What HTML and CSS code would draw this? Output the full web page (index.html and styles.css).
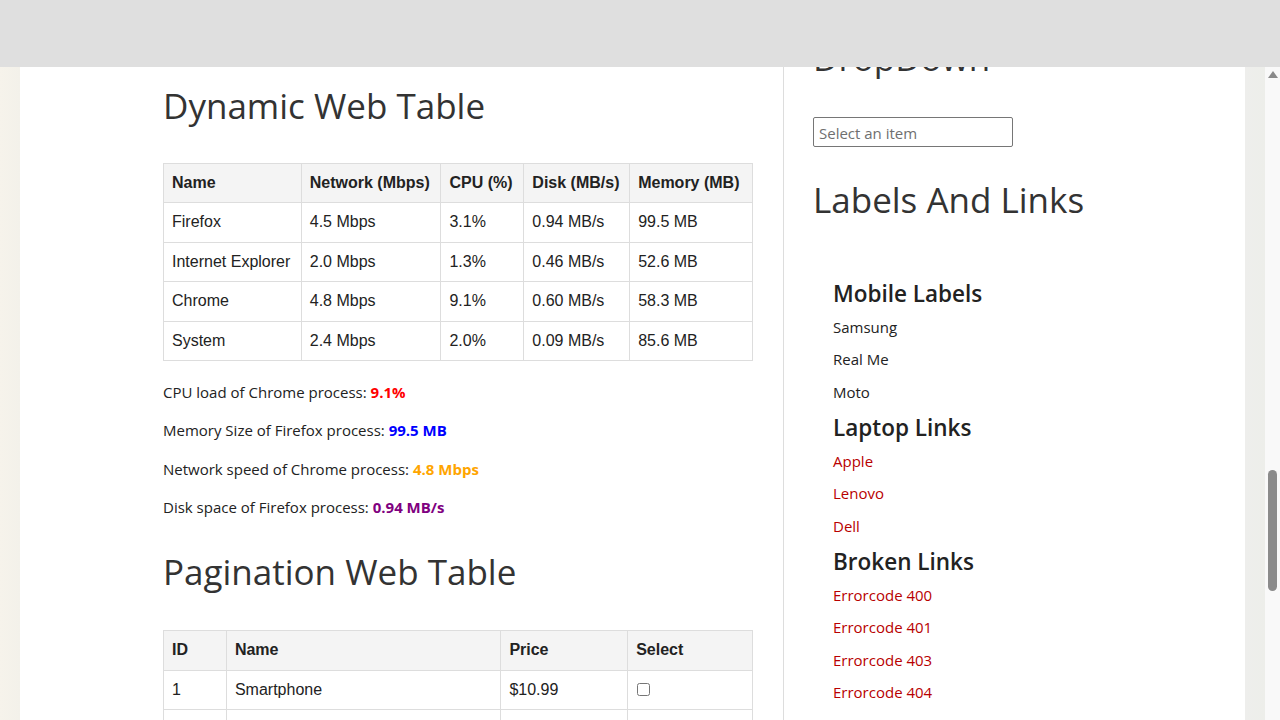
FILE: index.html
```html
<!DOCTYPE html>
<html lang="en">
<head>
<meta charset="utf-8">
<title>Web Tables</title>
<link rel="stylesheet" href="styles.css">
</head>
<body>
<div class="topbar"></div>
<div class="scrollbar">
  <div class="scroll-arrow"></div>
  <div class="scroll-thumb"></div>
</div>
<div class="page">
  <main class="main">
    <h2 class="title">Dynamic Web Table</h2>
    <table class="grid dyn">
      <thead>
        <tr><th class="c1">Name</th><th class="c2">Network (Mbps)</th><th class="c3">CPU (%)</th><th class="c4">Disk (MB/s)</th><th class="c5">Memory (MB)</th></tr>
      </thead>
      <tbody>
        <tr><td>Firefox</td><td>4.5 Mbps</td><td>3.1%</td><td>0.94 MB/s</td><td>99.5 MB</td></tr>
        <tr><td>Internet Explorer</td><td>2.0 Mbps</td><td>1.3%</td><td>0.46 MB/s</td><td>52.6 MB</td></tr>
        <tr><td>Chrome</td><td>4.8 Mbps</td><td>9.1%</td><td>0.60 MB/s</td><td>58.3 MB</td></tr>
        <tr><td>System</td><td>2.4 Mbps</td><td>2.0%</td><td>0.09 MB/s</td><td>85.6 MB</td></tr>
      </tbody>
    </table>
    <div class="facts">
      <p>CPU load of Chrome process: <strong class="red">9.1%</strong></p>
      <p>Memory Size of Firefox process: <strong class="blue">99.5 MB</strong></p>
      <p>Network speed of Chrome process: <strong class="orange">4.8 Mbps</strong></p>
      <p>Disk space of Firefox process: <strong class="purple">0.94 MB/s</strong></p>
    </div>
    <h2 class="title second">Pagination Web Table</h2>
    <table class="grid pag">
      <thead>
        <tr><th class="p1">ID</th><th class="p2">Name</th><th class="p3">Price</th><th class="p4">Select</th></tr>
      </thead>
      <tbody>
        <tr><td>1</td><td>Smartphone</td><td>$10.99</td><td><input type="checkbox"></td></tr>
        <tr><td>2</td><td>Laptop</td><td>$19.99</td><td><input type="checkbox"></td></tr>
      </tbody>
    </table>
  </main>
  <aside class="side">
    <h2 class="title">DropDown</h2>
    <input class="combo" type="text" placeholder="Select an item">
    <h2 class="title labels-title">Labels And Links</h2>
    <div class="widget">
      <h3 class="wtitle">Mobile Labels</h3>
      <ul class="items">
        <li>Samsung</li>
        <li>Real Me</li>
        <li>Moto</li>
      </ul>
      <h3 class="wtitle">Laptop Links</h3>
      <ul class="items links">
        <li><a href="#">Apple</a></li>
        <li><a href="#">Lenovo</a></li>
        <li><a href="#">Dell</a></li>
      </ul>
      <h3 class="wtitle">Broken Links</h3>
      <ul class="items links">
        <li><a href="#">Errorcode 400</a></li>
        <li><a href="#">Errorcode 401</a></li>
        <li><a href="#">Errorcode 403</a></li>
        <li><a href="#">Errorcode 404</a></li>
        <li><a href="#">Errorcode 500</a></li>
      </ul>
    </div>
  </aside>
</div>
</body>
</html>
```

FILE: styles.css
```css
html, body {
  margin: 0;
  padding: 0;
  height: 720px;
  overflow: hidden;
}
body {
  font-family: "Open Sans", "Noto Sans", sans-serif;
  color: #222;
  background: linear-gradient(90deg, #f6f3eb 0px, #f3f1ea 20px, #eeeeec 1245px, #edeeea 1265px);
}
.topbar {
  position: fixed;
  left: 0;
  top: 0;
  width: 1280px;
  height: 67px;
  background: #dfdfdf;
  z-index: 10;
}
.scrollbar {
  position: fixed;
  right: 0;
  top: 67px;
  width: 15px;
  height: 653px;
  background: #f9f9f9;
  z-index: 5;
}
.scroll-arrow {
  position: absolute;
  left: 3px;
  top: 4px;
  width: 0;
  height: 0;
  border-left: 5px solid transparent;
  border-right: 5px solid transparent;
  border-bottom: 7px solid #8a8a8a;
}
.scroll-thumb {
  position: absolute;
  left: 3px;
  top: 403px;
  width: 9px;
  height: 121px;
  border-radius: 5px;
  background: #8b8b8b;
}
.page {
  margin-left: 20px;
  width: 1225px;
  height: 720px;
  background: #fff;
  display: flex;
}
.main {
  width: 590px;
  padding: 84px 30px 0 143px;
  border-right: 1px solid #dddddd;
}
.side {
  flex: 1;
  padding: 36px 0 0 29px;
}
.title {
  font-family: "Open Sans", sans-serif;
  font-weight: 400;
  font-size: 35px;
  line-height: 43px;
  color: #333;
  margin: 0;
}
.grid {
  width: 590px;
  border-collapse: collapse;
  font-family: "Liberation Sans", Arial, sans-serif;
  font-size: 16px;
  color: #222;
  margin-top: 36px;
}
.grid th, .grid td {
  border: 1px solid #dddddd;
  padding: 10px 8px;
  text-align: left;
  line-height: 18.4px;
}
.grid th {
  background: #f4f4f4;
  font-weight: 700;
}
.grid td input {
  margin: 0 0 0 1px;
  width: 13px;
  height: 13px;
  vertical-align: -1px;
}
.c1 { width: 121px; }
.c2 { width: 123px; }
.c3 { width: 66px; }
.c4 { width: 89px; }
.c5 { width: 106px; }
.p1 { width: 46px; }
.p2 { width: 258px; }
.p3 { width: 110px; }
.p4 { width: 108px; }
.facts {
  margin-top: 20px;
}
.facts p {
  margin: 0 0 16.3px;
  font-size: 15px;
  line-height: 22px;
  color: #222;
}
.facts strong { font-weight: 700; }
.red { color: #ff0000; }
.blue { color: #0000ff; }
.orange { color: #ffa500; }
.purple { color: #800080; }
.title.second {
  margin-top: 32px;
}
.pag {
  margin-top: 37.5px;
}
.combo {
  display: block;
  box-sizing: border-box;
  width: 200px;
  height: 30px;
  margin: 37.5px 0 0 0;
  padding: 2px 5px 0;
  border: 1px solid #767676;
  border-radius: 2px;
  font-family: "Open Sans", sans-serif;
  font-size: 15px;
  color: #222;
  background: #fff;
}
.combo::placeholder {
  color: #6f6f6f;
}
.labels-title {
  margin-top: 31.5px;
}
.widget {
  padding: 58px 0 0 20px;
}
.wtitle {
  margin: 0;
  font-family: "Open Sans", sans-serif;
  font-weight: 600;
  font-size: 22.5px;
  line-height: 29px;
  color: #222;
}
.items {
  list-style: none;
  margin: 7.5px 0 10.5px;
  padding: 0;
  display: flex;
  flex-direction: column;
  gap: 10.5px;
}
.items li {
  font-size: 15px;
  line-height: 22px;
  color: #222;
}
.links a {
  color: #b80000;
  text-decoration: none;
}
```
